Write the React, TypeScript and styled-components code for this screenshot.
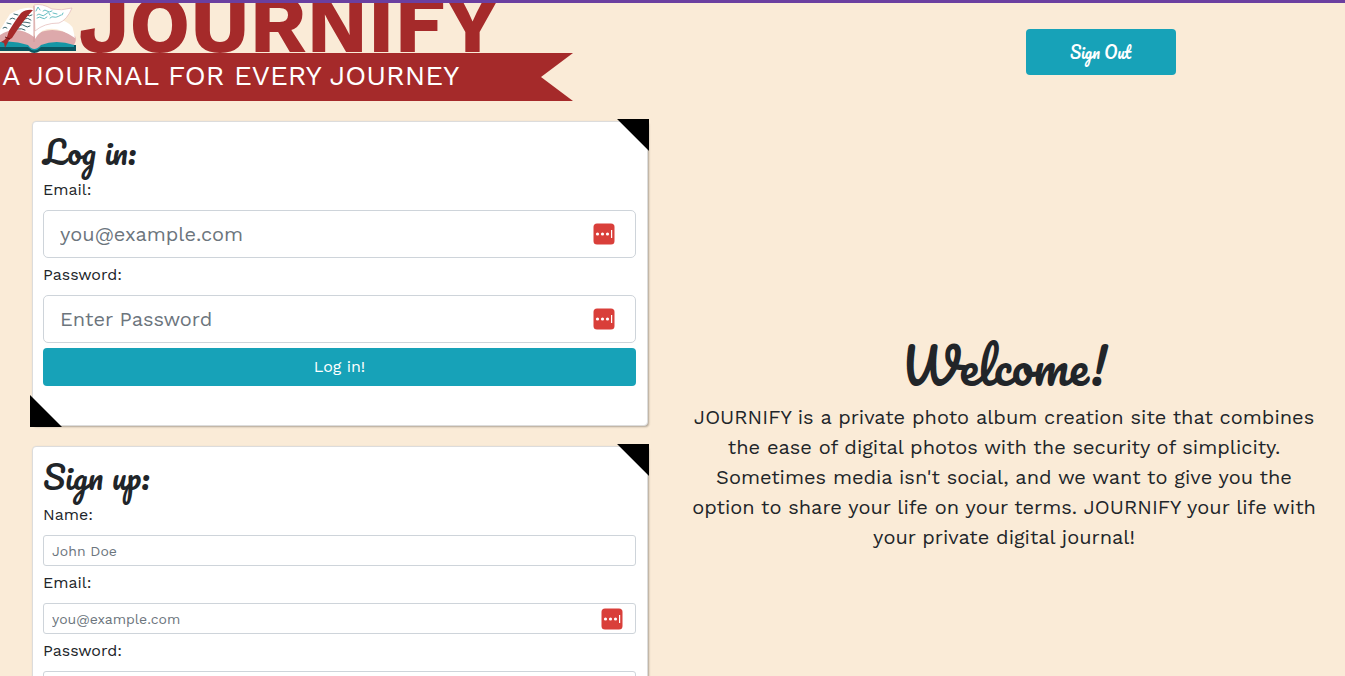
import React, { useId } from 'react';
import styled, { createGlobalStyle } from 'styled-components';

const sans = `'Work Sans', Inter, 'Open Sans', sans-serif`;
const script = `Pacifico, Lato, 'Liberation Sans', sans-serif`;
const red = '#a52a2a';
const teal = '#17a2b8';

const GlobalStyle = createGlobalStyle`
  *, *::before, *::after { box-sizing: border-box; }
  html { scrollbar-width: none; }
  body {
    margin: 0;
    background: #faebd7;
    color: #212529;
    font: 400 16px/24px ${sans};
  }
`;

const Page = styled.div`
  border-top: 3px solid #6b3fa0;
`;

const Header = styled.header`
  display: flex;
  justify-content: space-between;
  align-items: center;
  padding-right: 12.6%;
`;

const Brand = styled.div`
  width: 573px;
`;

const Wordmark = styled.h1`
  display: flex;
  align-items: flex-end;
  gap: 2px;
  height: 50px;
  margin: 0;
  overflow: hidden;
  color: ${red};
  font-size: 83px;
  font-weight: 700;
  line-height: 58px;
`;

const Ribbon = styled.p`
  margin: 0;
  padding: 0 2px 2px;
  background: ${red};
  clip-path: polygon(0 0, 100% 0, calc(100% - 32px) 50%, 100% 100%, 0 100%);
  color: #fff;
  font-size: 28px;
  line-height: 46px;
`;

const Button = styled.button`
  display: block;
  width: 100%;
  height: 38px;
  border: 0;
  border-radius: 4px;
  background: ${teal};
  color: #fff;
  font: 400 16px/24px ${sans};
  cursor: pointer;
`;

const SignOut = styled(Button)`
  width: 150px;
  height: 46px;
  font: 400 16px/24px ${script};
`;

const Main = styled.main`
  display: grid;
  grid-template-columns: 49% 1fr;
  margin-top: 20px;
`;

const Forms = styled.div`
  display: flex;
  flex-direction: column;
  gap: 20px;
  padding: 0 11px 20px 32px;
`;

const Card = styled.form`
  position: relative;
  padding: 10px 11px 39px 10px;
  border: 1px solid #dcdcdc;
  border-radius: 4px;
  background: #fff;
  box-shadow: 1px 1px 2px rgba(0, 0, 0, 0.3);

  &::before,
  &::after {
    content: '';
    position: absolute;
    width: 32px;
    height: 32px;
    background: #000;
  }
  &::before {
    top: -3px;
    right: -2px;
    clip-path: polygon(0 0, 100% 0, 100% 100%);
  }
  &::after {
    bottom: -2px;
    left: -3px;
    clip-path: polygon(0 0, 100% 100%, 0 100%);
  }
`;

const CardTitle = styled.h2`
  margin: 0 0 8px;
  font: 500 32px/38px ${script};
`;

const Label = styled.label`
  display: block;
  margin-bottom: 8px;
`;

const InputWrap = styled.div`
  position: relative;
  margin-bottom: 5px;
`;

const Input = styled.input<{ $large?: boolean }>`
  display: block;
  width: 100%;
  height: ${(p) => (p.$large ? 48 : 31)}px;
  padding: ${(p) => (p.$large ? '8px 16px' : '4px 8px')};
  border: 1px solid #ced4da;
  border-radius: ${(p) => (p.$large ? 5 : 3)}px;
  background: #fff;
  color: #495057;
  font: ${(p) => (p.$large ? '400 20px/30px' : '400 14px/21px')} ${sans};
  &::placeholder { color: #6c757d; opacity: 1; }
`;

const FillIcon = styled.svg<{ $large?: boolean }>`
  position: absolute;
  top: 0;
  bottom: 0;
  right: ${(p) => (p.$large ? 21 : 13)}px;
  margin: auto 0;
  width: 22px;
  height: 22px;
`;

const Welcome = styled.section`
  align-self: center;
  padding: 0 28px 0 32px;
  text-align: center;
`;

const WelcomeTitle = styled.h2`
  margin: 0 0 6px;
  font: 500 48px/60px ${script};
`;

const Lead = styled.p`
  margin: 0;
  font-size: 20px;
  line-height: 30px;
`;

function Book() {
  return (
    <svg width="76" height="50" viewBox="0 3 76 50" aria-hidden="true">
      <path d="M0 45h76v6H40q-6 4-11 0H0z" fill="#0b5560" />
      <path d="M0 40h74v7H41q-7 7-13 0H0z" fill="#1696a5" />
      <path d="M0 34Q16 24 34 36 50 24 75 36q2 5-1 9-18-6-33 0-7 8-13 0-14-5-28-3z" fill="#dda9ab" />
      <path d="M0 30L10 14q16-9 24-5v28Q17 24 0 35z" fill="#fff" />
      <path d="M35 28L62 20q10 4 11 9l2 9q-20-14-33-7-5 4-7 8z" fill="#fff" />
      <path d="M34 5q8-2 18 4 9 2 20-1-5 12-13 15-15 0-24 8z" fill="#fff" stroke="#e3b7b6" strokeWidth=".7" />
      <path d="M34 6v36" stroke="#cf9497" strokeWidth=".9" />
      <g fill="none" strokeWidth=".9" strokeLinecap="round">
        <path d="M36 11l2-4 2 3m3 1q2-2 4 0t5 0M37 15q2-2 4 0t5-1 4 1m3-2l4 1m6-1l-1 2M37 18q3-2 5 0t5-1m3 1q2-2 4-1t7-2" stroke="#55b5ba" />
        <path d="M14 14l4 1m-8 4q2-2 5 0m-8 4l4 1m-8 4q2-2 4 0m20-13q2 2 5 0m-8 4q4-2 7 1m-9 2q4 0 8 1m-10 2q3-1 5 1t5 0m-13 3q5-1 8 1" stroke="#26545b" />
      </g>
      <path d="M33 10q-7-1-12 3-4 5-9 13-4 5-5 11-2 3-6 5l3 1 1 5 4-8 3-2Q17 30 23 22 28 15 33 10z" fill={red} />
      <path d="M5 37l5 2" stroke="#6f1518" />
    </svg>
  );
}

type FieldProps = {
  label: string;
  type: string;
  placeholder?: string;
  large?: boolean;
  fill?: boolean;
};

function Field({ label, type, placeholder, large, fill }: FieldProps) {
  const id = useId();
  return (
    <>
      <Label htmlFor={id}>{label}</Label>
      <InputWrap>
        <Input id={id} type={type} placeholder={placeholder} $large={large} />
        {fill && (
          <FillIcon $large={large} viewBox="0 0 22 22" aria-hidden="true">
            <rect x=".5" y=".5" width="21" height="21" rx="3.5" fill="#d93f3a" />
            <g fill="#fff">
              <circle cx="4.5" cy="11" r="1.6" />
              <circle cx="9.5" cy="11" r="1.6" />
              <circle cx="14.5" cy="11" r="1.6" />
              <rect x="18" y="7" width="1.2" height="8" />
            </g>
          </FillIcon>
        )}
      </InputWrap>
    </>
  );
}

export default function App() {
  return (
    <Page>
      <GlobalStyle />
      <Header>
        <Brand>
          <Wordmark>
            <Book />
            JOURNIFY
          </Wordmark>
          <Ribbon>A JOURNAL FOR EVERY JOURNEY</Ribbon>
        </Brand>
        <SignOut type="button">Sign Out</SignOut>
      </Header>
      <Main>
        <Forms>
          <Card>
            <CardTitle>Log in:</CardTitle>
            <Field label="Email:" type="email" placeholder="you@example.com" large fill />
            <Field label="Password:" type="password" placeholder="Enter Password" large fill />
            <Button type="button">Log in!</Button>
          </Card>
          <Card>
            <CardTitle>Sign up:</CardTitle>
            <Field label="Name:" type="text" placeholder="John Doe" />
            <Field label="Email:" type="email" placeholder="you@example.com" fill />
            <Field label="Password:" type="password" fill />
          </Card>
        </Forms>
        <Welcome>
          <WelcomeTitle>Welcome!</WelcomeTitle>
          <Lead>
            JOURNIFY is a private photo album creation site that combines the ease of digital
            photos with the security of simplicity. Sometimes media isn't social, and we want to
            give you the option to share your life on your terms. JOURNIFY your life with your
            private digital journal!
          </Lead>
        </Welcome>
      </Main>
    </Page>
  );
}
